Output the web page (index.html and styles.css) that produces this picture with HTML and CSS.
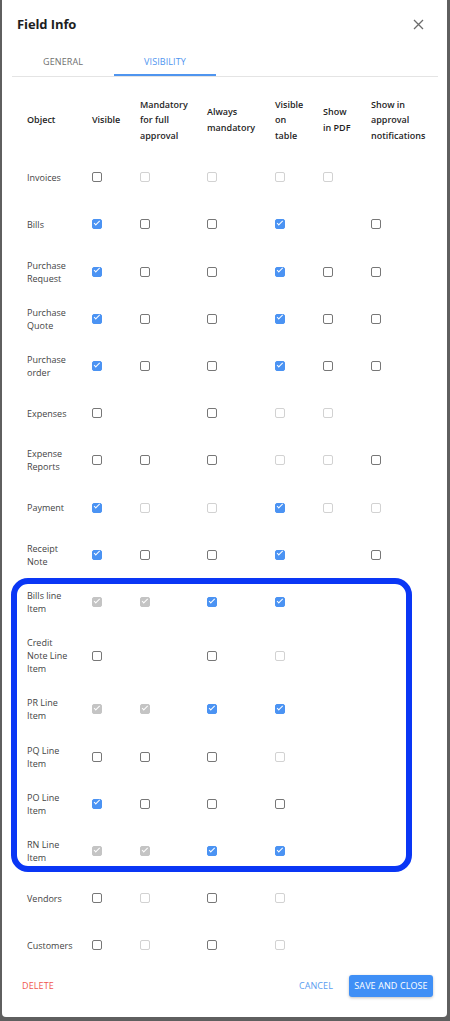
FILE: index.html
```html
<!DOCTYPE html>
<html lang="en">
<head>
<meta charset="utf-8">
<title>Field Info</title>
<link rel="stylesheet" href="styles.css">
</head>
<body>
<div class="modal">
  <div class="modal-head">
    <h1 class="title">Field Info</h1>
    <button class="close" aria-label="Close">
      <svg width="11" height="11" viewBox="0 0 11 11"><path d="M1 1 L10 10 M10 1 L1 10" stroke="#6b6b6b" stroke-width="1.3" fill="none"/></svg>
    </button>
  </div>
  <div class="tabs">
    <div class="tab">GENERAL</div>
    <div class="tab active">VISIBILITY</div>
  </div>

  <div class="table">
    <div class="row head">
      <div>Object</div>
      <div>Visible</div>
      <div>Mandatory<br>for full<br>approval</div>
      <div>Always<br>mandatory</div>
      <div>Visible<br>on<br>table</div>
      <div>Show<br>in PDF</div>
      <div>Show in<br>approval<br>notifications</div>
    </div>

    <div class="row"><div class="lbl">Invoices</div><div><span class="cb"></span></div><div><span class="cb dis"></span></div><div><span class="cb dis"></span></div><div><span class="cb dis"></span></div><div><span class="cb dis"></span></div><div></div></div>
    <div class="row"><div class="lbl">Bills</div><div><span class="cb on"></span></div><div><span class="cb"></span></div><div><span class="cb"></span></div><div><span class="cb on"></span></div><div></div><div><span class="cb"></span></div></div>
    <div class="row"><div class="lbl">Purchase<br>Request</div><div><span class="cb on"></span></div><div><span class="cb"></span></div><div><span class="cb"></span></div><div><span class="cb on"></span></div><div><span class="cb"></span></div><div><span class="cb"></span></div></div>
    <div class="row"><div class="lbl">Purchase<br>Quote</div><div><span class="cb on"></span></div><div><span class="cb"></span></div><div><span class="cb"></span></div><div><span class="cb on"></span></div><div><span class="cb"></span></div><div><span class="cb"></span></div></div>
    <div class="row"><div class="lbl">Purchase<br>order</div><div><span class="cb on"></span></div><div><span class="cb"></span></div><div><span class="cb"></span></div><div><span class="cb on"></span></div><div><span class="cb"></span></div><div><span class="cb"></span></div></div>
    <div class="row"><div class="lbl">Expenses</div><div><span class="cb"></span></div><div></div><div><span class="cb"></span></div><div><span class="cb dis"></span></div><div><span class="cb dis"></span></div><div></div></div>
    <div class="row"><div class="lbl">Expense<br>Reports</div><div><span class="cb"></span></div><div><span class="cb"></span></div><div><span class="cb"></span></div><div><span class="cb dis"></span></div><div><span class="cb dis"></span></div><div><span class="cb"></span></div></div>
    <div class="row"><div class="lbl">Payment</div><div><span class="cb on"></span></div><div><span class="cb dis"></span></div><div><span class="cb dis"></span></div><div><span class="cb on"></span></div><div><span class="cb dis"></span></div><div><span class="cb dis"></span></div></div>
    <div class="row"><div class="lbl">Receipt<br>Note</div><div><span class="cb on"></span></div><div><span class="cb"></span></div><div><span class="cb"></span></div><div><span class="cb on"></span></div><div></div><div><span class="cb"></span></div></div>

    <div class="group">
      <div class="row"><div class="lbl">Bills line<br>Item</div><div><span class="cb on-dis"></span></div><div><span class="cb on-dis"></span></div><div><span class="cb on"></span></div><div><span class="cb on"></span></div><div></div><div></div></div>
      <div class="row"><div class="lbl">Credit<br>Note Line<br>Item</div><div><span class="cb"></span></div><div></div><div><span class="cb"></span></div><div><span class="cb dis"></span></div><div></div><div></div></div>
      <div class="row"><div class="lbl">PR Line<br>Item</div><div><span class="cb on-dis"></span></div><div><span class="cb on-dis"></span></div><div><span class="cb on"></span></div><div><span class="cb on"></span></div><div></div><div></div></div>
      <div class="row"><div class="lbl">PQ Line<br>Item</div><div><span class="cb"></span></div><div><span class="cb"></span></div><div><span class="cb"></span></div><div><span class="cb dis"></span></div><div></div><div></div></div>
      <div class="row"><div class="lbl">PO Line<br>Item</div><div><span class="cb on"></span></div><div><span class="cb"></span></div><div><span class="cb"></span></div><div><span class="cb"></span></div><div></div><div></div></div>
      <div class="row"><div class="lbl">RN Line<br>Item</div><div><span class="cb on-dis"></span></div><div><span class="cb on-dis"></span></div><div><span class="cb on"></span></div><div><span class="cb on"></span></div><div></div><div></div></div>
      <div class="highlight"></div>
    </div>

    <div class="row"><div class="lbl">Vendors</div><div><span class="cb"></span></div><div><span class="cb dis"></span></div><div><span class="cb"></span></div><div><span class="cb dis"></span></div><div></div><div></div></div>
    <div class="row"><div class="lbl">Customers</div><div><span class="cb"></span></div><div><span class="cb dis"></span></div><div><span class="cb"></span></div><div><span class="cb dis"></span></div><div></div><div></div></div>
  </div>

  <div class="footer">
    <button class="btn-text delete">DELETE</button>
    <div class="spacer"></div>
    <button class="btn-text cancel">CANCEL</button>
    <button class="btn-primary">SAVE AND CLOSE</button>
  </div>
</div>
</body>
</html>
```

FILE: styles.css
```css
html, body {
  margin: 0;
  padding: 0;
}
body {
  background: #5f5f5f;
  font-family: "Open Sans", "Noto Sans", sans-serif;
  height: 1021px;
  overflow: hidden;
}
.modal {
  margin-left: 2px;
  width: 445px;
  height: 1017px;
  background: #fff;
  border-radius: 0 0 4px 4px;
  display: flex;
  flex-direction: column;
  box-sizing: border-box;
}
.modal-head {
  display: flex;
  align-items: center;
  justify-content: space-between;
  padding: 15px 23px 0 15px;
  height: 18px;
}
.title {
  margin: 0;
  font-size: 13px;
  line-height: 18px;
  font-weight: 700;
  color: #1e1e1e;
  letter-spacing: -0.1px;
}
.close {
  border: 0;
  background: none;
  padding: 0;
  width: 11px;
  height: 11px;
  display: block;
}
.close svg { display: block; }
.tabs {
  display: flex;
  margin: 13px 9px 0 10px;
  border-bottom: 1px solid #e4e4e4;
}
.tab {
  width: 102px;
  height: 30px;
  box-sizing: border-box;
  padding-top: 2px;
  border-bottom: 2px solid transparent;
  display: flex;
  align-items: center;
  justify-content: center;
  font-size: 9px;
  color: #6f6f6f;
  letter-spacing: 0.1px;
}
.tab.active {
  color: #4f95ef;
  border-bottom-color: #4f95ef;
}
.table {
  padding-left: 25px;
  margin-top: 9px;
}
.row {
  display: grid;
  grid-template-columns: 65px 48px 67px 68px 48px 48px 1fr;
  align-items: center;
  min-height: 47.2px;
  padding: 10.6px 0;
  box-sizing: border-box;
  font-size: 9px;
  line-height: 13px;
  color: #444;
}
.row.head {
  line-height: 15.5px;
  font-weight: 600;
  color: #1f1f1f;
}
.lbl {
  min-height: 13px;
}
.group {
  position: relative;
}
.highlight {
  position: absolute;
  top: 0;
  left: -16px;
  width: 401px;
  bottom: 2.5px;
  border: 6px solid #0a36f5;
  border-radius: 17px;
  box-sizing: border-box;
  pointer-events: none;
}
.cb {
  display: block;
  width: 10px;
  height: 10px;
  box-sizing: border-box;
  border: 1.5px solid #777;
  border-radius: 2px;
  position: relative;
}
.cb.dis {
  border-color: #d2d2d2;
}
.cb.on {
  background: #4b93f3;
  border-color: #4b93f3;
}
.cb.on-dis {
  background: #c4c4c4;
  border-color: #c4c4c4;
}
.cb.on::after,
.cb.on-dis::after {
  content: "";
  position: absolute;
  left: 0.8px;
  top: 0.6px;
  width: 4.6px;
  height: 2.2px;
  border-left: 1.3px solid #fff;
  border-bottom: 1.3px solid #fff;
  transform: rotate(-45deg);
}
.footer {
  display: flex;
  align-items: center;
  padding: 6px 14px 0 20px;
}
.spacer { flex: 1; }
button {
  font-family: inherit;
  cursor: pointer;
}
.btn-text {
  border: 0;
  background: none;
  padding: 0;
  font-size: 9px;
  line-height: 22px;
  letter-spacing: 0.1px;
}
.delete { color: #f0574f; }
.cancel { color: #5a9cf0; margin-right: 16px; }
.btn-primary {
  border: 0;
  border-radius: 3px;
  background: #3f8ff6;
  color: #fff;
  font-size: 9px;
  height: 22px;
  width: 84px;
  padding: 0;
  letter-spacing: 0.1px;
  box-shadow: 0 1px 3px rgba(0,0,0,0.25);
}
```
